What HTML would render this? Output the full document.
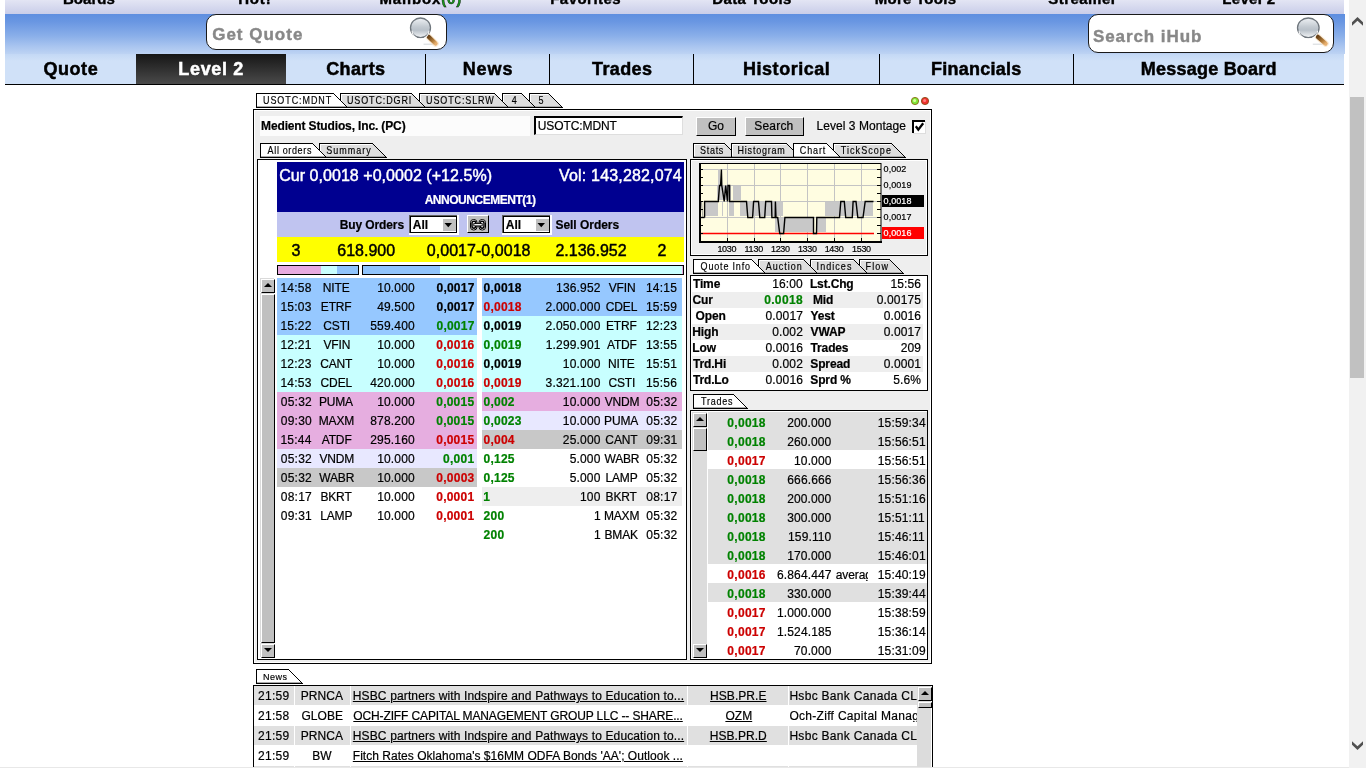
<!DOCTYPE html><html><head><meta charset="utf-8"><style>
html,body{margin:0;padding:0;width:1366px;height:768px;overflow:hidden;background:#fff;}
.t{position:absolute;white-space:nowrap;-webkit-text-stroke:0.2px currentColor;}
.r{position:absolute;}
svg{position:absolute;}
</style></head><body><div style="position:absolute;left:0;top:0;width:1366px;height:768px;overflow:hidden;will-change:transform;background:#fff">
<div class=r style="left:5px;top:0px;width:1339px;height:14px;background:linear-gradient(#e3e5f4,#c9cde9);"></div>
<div class=t style="left:63.00px;top:-9px;font:bold 15px/15px 'Liberation Sans',sans-serif;color:#000;letter-spacing:0.015px;-webkit-text-stroke:0.4px #000;">Boards</div>
<div class=t style="left:238.20px;top:-9px;font:bold 15px/15px 'Liberation Sans',sans-serif;color:#000;letter-spacing:0.825px;-webkit-text-stroke:0.4px #000;">Hot!</div>
<div class=t style="left:379.40px;top:-9px;font:bold 15px/15px 'Liberation Sans',sans-serif;color:#000;letter-spacing:0.847px;-webkit-text-stroke:0.4px #000;">Mailbox<span style='color:#1a9a1a'>(0)</span></div>
<div class=t style="left:550.20px;top:-9px;font:bold 15px/15px 'Liberation Sans',sans-serif;color:#000;letter-spacing:0.472px;-webkit-text-stroke:0.4px #000;">Favorites</div>
<div class=t style="left:712.20px;top:-9px;font:bold 15px/15px 'Liberation Sans',sans-serif;color:#000;letter-spacing:0.400px;-webkit-text-stroke:0.4px #000;">Data Tools</div>
<div class=t style="left:874.70px;top:-9px;font:bold 15px/15px 'Liberation Sans',sans-serif;color:#000;letter-spacing:0.272px;-webkit-text-stroke:0.4px #000;">More Tools</div>
<div class=t style="left:1048.30px;top:-9px;font:bold 15px/15px 'Liberation Sans',sans-serif;color:#000;letter-spacing:0.461px;-webkit-text-stroke:0.4px #000;">Streamer</div>
<div class=t style="left:1222.20px;top:-9px;font:bold 15px/15px 'Liberation Sans',sans-serif;color:#000;letter-spacing:0.358px;-webkit-text-stroke:0.4px #000;">Level 2</div>
<div class=r style="left:5px;top:14px;width:1340px;height:40px;background:linear-gradient(#5e8ee0 0px,#6a97e2 8px,#8aafe9 22px,#abc6f0 33px,#bdd3f3 40px);"></div>
<div class=r style="left:5px;top:54px;width:1339px;height:30px;background:linear-gradient(#c3d8f5 0px,#d0e1f8 7px,#d0e1f8 30px);"></div>
<div class=r style="left:5px;top:84px;width:1339px;height:1px;background:#000;"></div>
<div class=r style='left:206px;top:14px;width:239px;height:34px;border:1.5px solid #1a1a1a;border-radius:10px;background:#fff'></div>
<div class=t style="left:212.18px;top:26px;font:bold 17px/17px 'Liberation Sans',sans-serif;color:#888;letter-spacing:1.000px;-webkit-text-stroke:0.4px #888;">Get Quote</div>
<div class=r style='left:1088px;top:14px;width:244px;height:37px;border:1.5px solid #1a1a1a;border-radius:10px;background:#fff'></div>
<div class=t style="left:1092.90px;top:28px;font:bold 17px/17px 'Liberation Sans',sans-serif;color:#888;letter-spacing:0.927px;-webkit-text-stroke:0.4px #888;">Search iHub</div>
<svg style='left:0;top:0' width='1366' height='60' viewBox='0 0 1366 60'>
<defs><linearGradient id='mga' x1='0' y1='0' x2='0' y2='1'><stop offset='0' stop-color='#eef1f4'/><stop offset='0.45' stop-color='#c3cad1'/><stop offset='0.62' stop-color='#b9c1c9'/><stop offset='1' stop-color='#f4f6f8'/></linearGradient>
<linearGradient id='hga' x1='0' y1='0' x2='1' y2='1'><stop offset='0' stop-color='#6a4318'/><stop offset='0.6' stop-color='#b07a38'/><stop offset='1' stop-color='#e8b070'/></linearGradient></defs>
<line x1='423.6' y1='44.2' x2='434.6' y2='44.2' stroke='#c8ccd0' stroke-width='0.8'/>
<line x1='428.6' y1='36.8' x2='435.6' y2='43.6' stroke='#f8e0c0' stroke-width='6.5' stroke-linecap='round' opacity='0.6'/>
<line x1='428.6' y1='36.8' x2='435.6' y2='43.6' stroke='url(#hga)' stroke-width='4.2' stroke-linecap='round'/>
<ellipse cx='420.5' cy='27.8' rx='10' ry='9.8' fill='url(#mga)' stroke='#6f767d' stroke-width='1.3'/>
<path d='M412.0 30.8 A8.5 8.3 0 0 0 429.0 30.8' fill='none' stroke='#fff' stroke-width='1.1' opacity='0.9'/>
</svg>
<svg style='left:0;top:0' width='1366' height='60' viewBox='0 0 1366 60'>
<defs><linearGradient id='mgb' x1='0' y1='0' x2='0' y2='1'><stop offset='0' stop-color='#eef1f4'/><stop offset='0.45' stop-color='#c3cad1'/><stop offset='0.62' stop-color='#b9c1c9'/><stop offset='1' stop-color='#f4f6f8'/></linearGradient>
<linearGradient id='hgb' x1='0' y1='0' x2='1' y2='1'><stop offset='0' stop-color='#6a4318'/><stop offset='0.6' stop-color='#b07a38'/><stop offset='1' stop-color='#e8b070'/></linearGradient></defs>
<line x1='1312.8' y1='44.2' x2='1324.6' y2='44.2' stroke='#c8ccd0' stroke-width='0.8'/>
<line x1='1317.8' y1='36.8' x2='1325.6' y2='43.6' stroke='#f8e0c0' stroke-width='6.5' stroke-linecap='round' opacity='0.6'/>
<line x1='1317.8' y1='36.8' x2='1325.6' y2='43.6' stroke='url(#hgb)' stroke-width='4.2' stroke-linecap='round'/>
<ellipse cx='1308.3' cy='27.8' rx='10.8' ry='9.8' fill='url(#mgb)' stroke='#6f767d' stroke-width='1.3'/>
<path d='M1299.0 30.8 A9.3 8.3 0 0 0 1317.6 30.8' fill='none' stroke='#fff' stroke-width='1.1' opacity='0.9'/>
</svg>
<div class=r style="left:136px;top:54px;width:150px;height:30px;background:linear-gradient(#161616,#4a4a4a);"></div>
<div class=r style="left:425px;top:54px;width:1px;height:30px;background:#000;"></div>
<div class=r style="left:549px;top:54px;width:1px;height:30px;background:#000;"></div>
<div class=r style="left:693px;top:54px;width:1px;height:30px;background:#000;"></div>
<div class=r style="left:879px;top:54px;width:1px;height:30px;background:#000;"></div>
<div class=r style="left:1073px;top:54px;width:1px;height:30px;background:#000;"></div>
<div class=t style="left:43.50px;top:60px;font:bold 18px/18px 'Liberation Sans',sans-serif;color:#000;letter-spacing:0.544px;-webkit-text-stroke:0.5px #000;">Quote</div>
<div class=t style="left:178.30px;top:60px;font:bold 18px/18px 'Liberation Sans',sans-serif;color:#fff;letter-spacing:0.667px;-webkit-text-stroke:0.5px #fff;">Level 2</div>
<div class=t style="left:326.20px;top:60px;font:bold 18px/18px 'Liberation Sans',sans-serif;color:#000;letter-spacing:0.360px;-webkit-text-stroke:0.5px #000;">Charts</div>
<div class=t style="left:462.70px;top:60px;font:bold 18px/18px 'Liberation Sans',sans-serif;color:#000;letter-spacing:0.933px;-webkit-text-stroke:0.5px #000;">News</div>
<div class=t style="left:592.00px;top:60px;font:bold 18px/18px 'Liberation Sans',sans-serif;color:#000;letter-spacing:0.380px;-webkit-text-stroke:0.5px #000;">Trades</div>
<div class=t style="left:743.00px;top:60px;font:bold 18px/18px 'Liberation Sans',sans-serif;color:#000;letter-spacing:0.533px;-webkit-text-stroke:0.5px #000;">Historical</div>
<div class=t style="left:931.00px;top:60px;font:bold 18px/18px 'Liberation Sans',sans-serif;color:#000;letter-spacing:0.244px;-webkit-text-stroke:0.5px #000;">Financials</div>
<div class=t style="left:1140.70px;top:60px;font:bold 18px/18px 'Liberation Sans',sans-serif;color:#000;letter-spacing:0.237px;-webkit-text-stroke:0.5px #000;">Message Board</div>
<div class=r style="left:1349px;top:0px;width:17px;height:768px;background:#f1f1f1;"></div>
<div class=r style="left:1350px;top:97px;width:14px;height:281px;background:#c1c1c1;"></div>
<svg style='left:1346px;top:10px' width='20' height='20' viewBox='1346 10 20 20'><path d='M1352 22.2 L1357.5 17 L1363 22.2 L1363 25.8 L1357.5 20.8 L1352 25.8 Z' fill='#505050'/></svg>
<svg style='left:1346px;top:735px' width='20' height='20' viewBox='1346 735 20 20'><path d='M1352 741.2 L1357.5 746.2 L1363 741.2 L1363 744.8 L1357.5 750 L1352 744.8 Z' fill='#505050'/></svg>
<svg style='left:254px;top:92px' width='310' height='17' shape-rendering='crispEdges'><polygon points='275.5,1.5 294.5,1.5 308.5,15.5 275.5,15.5' fill='#dedede' stroke='#000' stroke-width='1'/><path d='M276.5 14.5 V2.5 H294' fill='none' stroke='#fff' stroke-width='1'/><line x1='276' y1='14.5' x2='307' y2='14.5' stroke='#aaa' stroke-width='1'/><polygon points='248.5,1.5 267.5,1.5 281.5,15.5 248.5,15.5' fill='#dedede' stroke='#000' stroke-width='1'/><path d='M249.5 14.5 V2.5 H267' fill='none' stroke='#fff' stroke-width='1'/><line x1='249' y1='14.5' x2='280' y2='14.5' stroke='#aaa' stroke-width='1'/><polygon points='165.5,1.5 240.5,1.5 254.5,15.5 165.5,15.5' fill='#dedede' stroke='#000' stroke-width='1'/><path d='M166.5 14.5 V2.5 H240' fill='none' stroke='#fff' stroke-width='1'/><line x1='166' y1='14.5' x2='253' y2='14.5' stroke='#aaa' stroke-width='1'/><polygon points='86.5,1.5 157.5,1.5 171.5,15.5 86.5,15.5' fill='#dedede' stroke='#000' stroke-width='1'/><path d='M87.5 14.5 V2.5 H157' fill='none' stroke='#fff' stroke-width='1'/><line x1='87' y1='14.5' x2='170' y2='14.5' stroke='#aaa' stroke-width='1'/><polygon points='2.5,1.5 79.5,1.5 93.5,15.5 2.5,15.5' fill='#fff' stroke='#000' stroke-width='1'/><line x1='3' y1='14.5' x2='92' y2='14.5' stroke='#aaa' stroke-width='1'/></svg>
<div class=t style="left:262.98px;top:97px;font:9px/9px 'Liberation Sans',sans-serif;color:#000;letter-spacing:0.919px;-webkit-text-stroke:0.15px #000;transform:scaleY(1.17);transform-origin:0 7px;">USOTC:MDNT</div>
<div class=t style="left:346.98px;top:97px;font:9px/9px 'Liberation Sans',sans-serif;color:#000;letter-spacing:0.878px;-webkit-text-stroke:0.15px #000;transform:scaleY(1.17);transform-origin:0 7px;">USOTC:DGRI</div>
<div class=t style="left:426.07px;top:97px;font:9px/9px 'Liberation Sans',sans-serif;color:#000;letter-spacing:0.872px;-webkit-text-stroke:0.15px #000;transform:scaleY(1.17);transform-origin:0 7px;">USOTC:SLRW</div>
<div class=t style="left:511.75px;top:97px;font:9px/9px 'Liberation Sans',sans-serif;color:#000;-webkit-text-stroke:0.15px #000;transform:scaleY(1.17);transform-origin:0 7px;">4</div>
<div class=t style="left:538.62px;top:97px;font:9px/9px 'Liberation Sans',sans-serif;color:#000;-webkit-text-stroke:0.15px #000;transform:scaleY(1.17);transform-origin:0 7px;">5</div>
<svg style='left:910px;top:96px' width='20' height='10'><circle cx='5' cy='5' r='3.6' fill='#7de83a' stroke='#8a6a10' stroke-width='0.9'/><circle cx='4.6' cy='4.6' r='1.5' fill='#d8ff9a'/><circle cx='15' cy='5' r='3.6' fill='#f03030' stroke='#8a4a10' stroke-width='0.9'/><circle cx='14.6' cy='4.6' r='1.5' fill='#ff8080'/></svg>
<div class=r style='left:253px;top:109px;width:677px;height:553px;border:1px solid #000;background:#eee;box-shadow:inset 1px 1px 0 #fff, inset -1px -1px 0 #fff'></div>
<div class=r style="left:260px;top:116px;width:270px;height:20px;background:#fcfcfc;"></div>
<div class=t style="left:261.05px;top:120px;font:bold 12px/12px 'Liberation Sans',sans-serif;color:#000;letter-spacing:-0.137px;">Medient Studios, Inc. (PC)</div>
<div class=r style='left:534px;top:116px;width:146px;height:16px;background:#fff;border-top:2px solid #000;border-left:2px solid #000;border-bottom:1px solid #dedede;border-right:1px solid #dedede'></div>
<div class=t style="left:537.73px;top:120px;font:12px/12px 'Liberation Sans',sans-serif;color:#000;letter-spacing:-0.086px;">USOTC:MDNT</div>
<div class=r style='left:696px;top:117px;width:38px;height:17px;background:#c0c0c0;border-top:1px solid #fff;border-left:1px solid #fff;border-right:1px solid #000;border-bottom:1px solid #000'></div>
<div class=t style="left:708.08px;top:120px;font:12px/12px 'Liberation Sans',sans-serif;color:#000;letter-spacing:-0.275px;">Go</div>
<div class=r style='left:745px;top:117px;width:57px;height:17px;background:#c0c0c0;border-top:1px solid #fff;border-left:1px solid #fff;border-right:1px solid #000;border-bottom:1px solid #000'></div>
<div class=t style="left:754.30px;top:120px;font:12px/12px 'Liberation Sans',sans-serif;color:#000;letter-spacing:0.190px;">Search</div>
<div class=t style="left:816.50px;top:120px;font:12px/12px 'Liberation Sans',sans-serif;color:#000;letter-spacing:0.048px;">Level 3 Montage</div>
<div class=r style='left:912px;top:120px;width:11px;height:11px;background:#fff;border-top:2px solid #000;border-left:2px solid #000;border-bottom:0;border-right:0;box-shadow:1px 1px 0 #ddd'></div>
<svg style='left:912px;top:120px' width='14' height='14'><path d='M3.8 6.2 L6.3 9.6 L11.2 3.2' fill='none' stroke='#000' stroke-width='2.3'/></svg>
<svg style='left:258px;top:142px' width='130' height='17' shape-rendering='crispEdges'><polygon points='61.5,1.5 114.5,1.5 128.5,15.5 61.5,15.5' fill='#dedede' stroke='#000' stroke-width='1'/><path d='M62.5 14.5 V2.5 H114' fill='none' stroke='#fff' stroke-width='1'/><line x1='62' y1='14.5' x2='127' y2='14.5' stroke='#aaa' stroke-width='1'/><polygon points='2.5,1.5 54.5,1.5 68.5,15.5 2.5,15.5' fill='#fff' stroke='#000' stroke-width='1'/><line x1='3' y1='14.5' x2='67' y2='14.5' stroke='#aaa' stroke-width='1'/></svg>
<div class=t style="left:267.60px;top:147px;font:9px/9px 'Liberation Sans',sans-serif;color:#000;letter-spacing:0.642px;-webkit-text-stroke:0.15px #000;transform:scaleY(1.17);transform-origin:0 7px;">All orders</div>
<div class=t style="left:326.32px;top:147px;font:9px/9px 'Liberation Sans',sans-serif;color:#000;letter-spacing:0.996px;-webkit-text-stroke:0.15px #000;transform:scaleY(1.17);transform-origin:0 7px;">Summary</div>
<div class=r style='left:257px;top:159px;width:428px;height:499px;border:1px solid #000;background:#fff'></div>
<div class=r style="left:277px;top:162px;width:407px;height:50px;background:#000090;"></div>
<div class=t style="left:279.15px;top:168px;font:16px/16px 'Liberation Sans',sans-serif;color:#fff;letter-spacing:0.046px;-webkit-text-stroke:0.45px #fff;">Cur 0,0018 +0,0002 (+12.5%)</div>
<div class=t style="left:559.08px;top:168px;font:16px/16px 'Liberation Sans',sans-serif;color:#fff;letter-spacing:0.172px;-webkit-text-stroke:0.45px #fff;">Vol: 143,282,074</div>
<div class=t style="left:424.65px;top:194px;font:bold 12px/12px 'Liberation Sans',sans-serif;color:#fff;letter-spacing:-0.473px;">ANNOUNCEMENT(1)</div>
<div class=r style="left:277px;top:212px;width:407px;height:25px;background:#c0c4f0;"></div>
<div class=t style="left:339.75px;top:219px;font:bold 12px/12px 'Liberation Sans',sans-serif;color:#000;letter-spacing:-0.114px;">Buy Orders</div>
<div class=t style="left:555.42px;top:219px;font:bold 12px/12px 'Liberation Sans',sans-serif;color:#000;letter-spacing:-0.025px;">Sell Orders</div>
<div class=r style="left:409px;top:215px;width:50px;height:20px;background:#fff;"></div>
<div class=r style="left:409px;top:215px;width:48px;height:1px;background:#606060;"></div>
<div class=r style="left:409px;top:215px;width:1px;height:18px;background:#606060;"></div>
<div class=r style='left:410px;top:216px;width:47px;height:17px;border:1px solid #000;box-sizing:border-box'></div>
<div class=r style="left:441px;top:217px;width:13px;height:1px;background:#fff;"></div>
<div class=r style="left:441px;top:217px;width:1px;height:14px;background:#fff;"></div>
<div class=r style="left:443px;top:219px;width:13px;height:12px;background:#c0c0c0;"></div>
<svg style='left:444px;top:223px' width='9' height='6'><path d='M0.5 0 H8 L4.25 4.2 Z' fill='#000'/></svg>
<div class=t style="left:412.65px;top:219px;font:bold 12px/12px 'Liberation Sans',sans-serif;color:#000;letter-spacing:0.100px;">All</div>
<div class=r style="left:502px;top:215px;width:50px;height:20px;background:#fff;"></div>
<div class=r style="left:502px;top:215px;width:48px;height:1px;background:#606060;"></div>
<div class=r style="left:502px;top:215px;width:1px;height:18px;background:#606060;"></div>
<div class=r style='left:503px;top:216px;width:47px;height:17px;border:1px solid #000;box-sizing:border-box'></div>
<div class=r style="left:534px;top:217px;width:13px;height:1px;background:#fff;"></div>
<div class=r style="left:534px;top:217px;width:1px;height:14px;background:#fff;"></div>
<div class=r style="left:536px;top:219px;width:13px;height:12px;background:#c0c0c0;"></div>
<svg style='left:537px;top:223px' width='9' height='6'><path d='M0.5 0 H8 L4.25 4.2 Z' fill='#000'/></svg>
<div class=t style="left:505.65px;top:219px;font:bold 12px/12px 'Liberation Sans',sans-serif;color:#000;letter-spacing:0.100px;">All</div>
<div class=r style='left:467px;top:215px;width:20px;height:16px;background:#c0c0c0;border-top:1px solid #fff;border-left:1px solid #fff;border-right:1px solid #000;border-bottom:1px solid #000'></div>
<svg style='left:469px;top:218px' width='19' height='14'><rect x='1.5' y='1.5' width='6.5' height='10.5' rx='3' fill='#fff' stroke='#000' stroke-width='1'/><rect x='10' y='1.5' width='6.5' height='10.5' rx='3' fill='#fff' stroke='#000' stroke-width='1'/><rect x='3' y='3.2' width='3.8' height='7' rx='1.9' fill='none' stroke='#000' stroke-width='1.5'/><rect x='11.2' y='3.2' width='3.8' height='7' rx='1.9' fill='none' stroke='#000' stroke-width='1.5'/><rect x='4.8' y='5.6' width='8.4' height='2.3' fill='#fff' stroke='#000' stroke-width='0.9'/></svg>
<div class=r style="left:277px;top:237px;width:407px;height:25px;background:#ffff00;"></div>
<div class=t style="left:291.38px;top:243px;font:16px/16px 'Liberation Sans',sans-serif;color:#000;-webkit-text-stroke:0.45px #000;">3</div>
<div class=t style="left:337.25px;top:243px;font:16px/16px 'Liberation Sans',sans-serif;color:#000;letter-spacing:0.017px;-webkit-text-stroke:0.45px #000;">618.900</div>
<div class=t style="left:426.77px;top:243px;font:16px/16px 'Liberation Sans',sans-serif;color:#000;letter-spacing:0.044px;-webkit-text-stroke:0.45px #000;">0,0017-0,0018</div>
<div class=t style="left:555.45px;top:243px;font:16px/16px 'Liberation Sans',sans-serif;color:#000;letter-spacing:-0.003px;-webkit-text-stroke:0.45px #000;">2.136.952</div>
<div class=t style="left:657.45px;top:243px;font:16px/16px 'Liberation Sans',sans-serif;color:#000;-webkit-text-stroke:0.45px #000;">2</div>
<div class=r style='left:277px;top:265px;width:80px;height:8px;border:1px solid #000;background:linear-gradient(90deg,#e8aae0 0,#e8aae0 43px,#c8ffff 43px,#c8ffff 59px,#90c4fc 59px)'></div>
<div class=r style='left:362px;top:265px;width:320px;height:8px;border:1px solid #000;background:linear-gradient(90deg,#90c4fc 0,#90c4fc 77px,#c8ffff 77px,#c8ffff 319px,#e8aae0 319px)'></div>
<div class=r style="left:277px;top:278px;width:200px;height:19px;background:#96c8ff;"></div>
<div class=t style="left:280.43px;top:282px;font:12px/12px 'Liberation Sans',sans-serif;color:#000;letter-spacing:0.220px;">14:58</div>
<div class=t style="left:322.79px;top:282px;font:12px/12px 'Liberation Sans',sans-serif;color:#000;letter-spacing:-0.150px;">NITE</div>
<div class=t style="left:377.15px;top:282px;font:12px/12px 'Liberation Sans',sans-serif;color:#000;letter-spacing:0.180px;">10.000</div>
<div class=t style="left:436.48px;top:282px;font:bold 12px/12px 'Liberation Sans',sans-serif;color:#000;letter-spacing:0.240px;">0,0017</div>
<div class=r style="left:277px;top:297px;width:200px;height:19px;background:#96c8ff;"></div>
<div class=t style="left:280.43px;top:301px;font:12px/12px 'Liberation Sans',sans-serif;color:#000;letter-spacing:0.220px;">15:03</div>
<div class=t style="left:320.79px;top:301px;font:12px/12px 'Liberation Sans',sans-serif;color:#000;letter-spacing:-0.150px;">ETRF</div>
<div class=t style="left:377.15px;top:301px;font:12px/12px 'Liberation Sans',sans-serif;color:#000;letter-spacing:0.180px;">49.500</div>
<div class=t style="left:436.48px;top:301px;font:bold 12px/12px 'Liberation Sans',sans-serif;color:#000;letter-spacing:0.240px;">0,0017</div>
<div class=r style="left:277px;top:316px;width:200px;height:19px;background:#96c8ff;"></div>
<div class=t style="left:280.43px;top:320px;font:12px/12px 'Liberation Sans',sans-serif;color:#000;letter-spacing:0.220px;">15:22</div>
<div class=t style="left:323.29px;top:320px;font:12px/12px 'Liberation Sans',sans-serif;color:#000;letter-spacing:-0.150px;">CSTI</div>
<div class=t style="left:370.22px;top:320px;font:12px/12px 'Liberation Sans',sans-serif;color:#000;letter-spacing:0.180px;">559.400</div>
<div class=t style="left:436.48px;top:320px;font:bold 12px/12px 'Liberation Sans',sans-serif;color:#008200;letter-spacing:0.240px;">0,0017</div>
<div class=r style="left:277px;top:335px;width:200px;height:19px;background:#c8ffff;"></div>
<div class=t style="left:280.43px;top:339px;font:12px/12px 'Liberation Sans',sans-serif;color:#000;letter-spacing:0.220px;">12:21</div>
<div class=t style="left:323.48px;top:339px;font:12px/12px 'Liberation Sans',sans-serif;color:#000;letter-spacing:-0.150px;">VFIN</div>
<div class=t style="left:377.15px;top:339px;font:12px/12px 'Liberation Sans',sans-serif;color:#000;letter-spacing:0.180px;">10.000</div>
<div class=t style="left:436.35px;top:339px;font:bold 12px/12px 'Liberation Sans',sans-serif;color:#cc0000;letter-spacing:0.240px;">0,0016</div>
<div class=r style="left:277px;top:354px;width:200px;height:19px;background:#c8ffff;"></div>
<div class=t style="left:280.43px;top:358px;font:12px/12px 'Liberation Sans',sans-serif;color:#000;letter-spacing:0.220px;">12:23</div>
<div class=t style="left:320.16px;top:358px;font:12px/12px 'Liberation Sans',sans-serif;color:#000;letter-spacing:-0.150px;">CANT</div>
<div class=t style="left:377.15px;top:358px;font:12px/12px 'Liberation Sans',sans-serif;color:#000;letter-spacing:0.180px;">10.000</div>
<div class=t style="left:436.35px;top:358px;font:bold 12px/12px 'Liberation Sans',sans-serif;color:#cc0000;letter-spacing:0.240px;">0,0016</div>
<div class=r style="left:277px;top:373px;width:200px;height:19px;background:#c8ffff;"></div>
<div class=t style="left:280.43px;top:377px;font:12px/12px 'Liberation Sans',sans-serif;color:#000;letter-spacing:0.220px;">14:53</div>
<div class=t style="left:320.60px;top:377px;font:12px/12px 'Liberation Sans',sans-serif;color:#000;letter-spacing:-0.150px;">CDEL</div>
<div class=t style="left:370.22px;top:377px;font:12px/12px 'Liberation Sans',sans-serif;color:#000;letter-spacing:0.180px;">420.000</div>
<div class=t style="left:436.35px;top:377px;font:bold 12px/12px 'Liberation Sans',sans-serif;color:#cc0000;letter-spacing:0.240px;">0,0016</div>
<div class=r style="left:277px;top:392px;width:200px;height:19px;background:#e6aee0;"></div>
<div class=t style="left:280.80px;top:396px;font:12px/12px 'Liberation Sans',sans-serif;color:#000;letter-spacing:0.220px;">05:32</div>
<div class=t style="left:318.91px;top:396px;font:12px/12px 'Liberation Sans',sans-serif;color:#000;letter-spacing:-0.150px;">PUMA</div>
<div class=t style="left:377.15px;top:396px;font:12px/12px 'Liberation Sans',sans-serif;color:#000;letter-spacing:0.180px;">10.000</div>
<div class=t style="left:436.23px;top:396px;font:bold 12px/12px 'Liberation Sans',sans-serif;color:#008200;letter-spacing:0.240px;">0,0015</div>
<div class=r style="left:277px;top:411px;width:200px;height:19px;background:#e6aee0;"></div>
<div class=t style="left:280.80px;top:415px;font:12px/12px 'Liberation Sans',sans-serif;color:#000;letter-spacing:0.220px;">09:30</div>
<div class=t style="left:318.73px;top:415px;font:12px/12px 'Liberation Sans',sans-serif;color:#000;letter-spacing:-0.150px;">MAXM</div>
<div class=t style="left:370.22px;top:415px;font:12px/12px 'Liberation Sans',sans-serif;color:#000;letter-spacing:0.180px;">878.200</div>
<div class=t style="left:436.23px;top:415px;font:bold 12px/12px 'Liberation Sans',sans-serif;color:#008200;letter-spacing:0.240px;">0,0015</div>
<div class=r style="left:277px;top:430px;width:200px;height:19px;background:#e6aee0;"></div>
<div class=t style="left:280.43px;top:434px;font:12px/12px 'Liberation Sans',sans-serif;color:#000;letter-spacing:0.220px;">15:44</div>
<div class=t style="left:321.73px;top:434px;font:12px/12px 'Liberation Sans',sans-serif;color:#000;letter-spacing:-0.150px;">ATDF</div>
<div class=t style="left:370.22px;top:434px;font:12px/12px 'Liberation Sans',sans-serif;color:#000;letter-spacing:0.180px;">295.160</div>
<div class=t style="left:436.23px;top:434px;font:bold 12px/12px 'Liberation Sans',sans-serif;color:#cc0000;letter-spacing:0.240px;">0,0015</div>
<div class=r style="left:277px;top:449px;width:200px;height:19px;background:#e8e8ff;"></div>
<div class=t style="left:280.80px;top:453px;font:12px/12px 'Liberation Sans',sans-serif;color:#000;letter-spacing:0.220px;">05:32</div>
<div class=t style="left:319.48px;top:453px;font:12px/12px 'Liberation Sans',sans-serif;color:#000;letter-spacing:-0.150px;">VNDM</div>
<div class=t style="left:377.15px;top:453px;font:12px/12px 'Liberation Sans',sans-serif;color:#000;letter-spacing:0.180px;">10.000</div>
<div class=t style="left:443.09px;top:453px;font:bold 12px/12px 'Liberation Sans',sans-serif;color:#008200;letter-spacing:0.240px;">0,001</div>
<div class=r style="left:277px;top:468px;width:200px;height:19px;background:#c8c8c8;"></div>
<div class=t style="left:280.80px;top:472px;font:12px/12px 'Liberation Sans',sans-serif;color:#000;letter-spacing:0.220px;">05:32</div>
<div class=t style="left:319.23px;top:472px;font:12px/12px 'Liberation Sans',sans-serif;color:#000;letter-spacing:-0.150px;">WABR</div>
<div class=t style="left:377.15px;top:472px;font:12px/12px 'Liberation Sans',sans-serif;color:#000;letter-spacing:0.180px;">10.000</div>
<div class=t style="left:436.35px;top:472px;font:bold 12px/12px 'Liberation Sans',sans-serif;color:#cc0000;letter-spacing:0.240px;">0,0003</div>
<div class=t style="left:280.80px;top:491px;font:12px/12px 'Liberation Sans',sans-serif;color:#000;letter-spacing:0.220px;">08:17</div>
<div class=t style="left:320.41px;top:491px;font:12px/12px 'Liberation Sans',sans-serif;color:#000;letter-spacing:-0.150px;">BKRT</div>
<div class=t style="left:377.15px;top:491px;font:12px/12px 'Liberation Sans',sans-serif;color:#000;letter-spacing:0.180px;">10.000</div>
<div class=t style="left:436.23px;top:491px;font:bold 12px/12px 'Liberation Sans',sans-serif;color:#cc0000;letter-spacing:0.240px;">0,0001</div>
<div class=t style="left:280.80px;top:510px;font:12px/12px 'Liberation Sans',sans-serif;color:#000;letter-spacing:0.220px;">09:31</div>
<div class=t style="left:320.23px;top:510px;font:12px/12px 'Liberation Sans',sans-serif;color:#000;letter-spacing:-0.150px;">LAMP</div>
<div class=t style="left:377.15px;top:510px;font:12px/12px 'Liberation Sans',sans-serif;color:#000;letter-spacing:0.180px;">10.000</div>
<div class=t style="left:436.23px;top:510px;font:bold 12px/12px 'Liberation Sans',sans-serif;color:#cc0000;letter-spacing:0.240px;">0,0001</div>
<div class=r style="left:482px;top:278px;width:200px;height:19px;background:#96c8ff;"></div>
<div class=t style="left:483.50px;top:282px;font:bold 12px/12px 'Liberation Sans',sans-serif;color:#000;letter-spacing:0.240px;">0,0018</div>
<div class=t style="left:556.04px;top:282px;font:12px/12px 'Liberation Sans',sans-serif;color:#000;letter-spacing:0.180px;">136.952</div>
<div class=t style="left:608.68px;top:282px;font:12px/12px 'Liberation Sans',sans-serif;color:#000;letter-spacing:-0.150px;">VFIN</div>
<div class=t style="left:645.92px;top:282px;font:12px/12px 'Liberation Sans',sans-serif;color:#000;letter-spacing:0.220px;">14:15</div>
<div class=r style="left:482px;top:297px;width:200px;height:19px;background:#96c8ff;"></div>
<div class=t style="left:483.50px;top:301px;font:bold 12px/12px 'Liberation Sans',sans-serif;color:#cc0000;letter-spacing:0.240px;">0,0018</div>
<div class=t style="left:545.56px;top:301px;font:12px/12px 'Liberation Sans',sans-serif;color:#000;letter-spacing:0.180px;">2.000.000</div>
<div class=t style="left:605.80px;top:301px;font:12px/12px 'Liberation Sans',sans-serif;color:#000;letter-spacing:-0.150px;">CDEL</div>
<div class=t style="left:645.92px;top:301px;font:12px/12px 'Liberation Sans',sans-serif;color:#000;letter-spacing:0.220px;">15:59</div>
<div class=r style="left:482px;top:316px;width:200px;height:19px;background:#c8ffff;"></div>
<div class=t style="left:483.50px;top:320px;font:bold 12px/12px 'Liberation Sans',sans-serif;color:#000;letter-spacing:0.240px;">0,0019</div>
<div class=t style="left:545.56px;top:320px;font:12px/12px 'Liberation Sans',sans-serif;color:#000;letter-spacing:0.180px;">2.050.000</div>
<div class=t style="left:605.99px;top:320px;font:12px/12px 'Liberation Sans',sans-serif;color:#000;letter-spacing:-0.150px;">ETRF</div>
<div class=t style="left:645.92px;top:320px;font:12px/12px 'Liberation Sans',sans-serif;color:#000;letter-spacing:0.220px;">12:23</div>
<div class=r style="left:482px;top:335px;width:200px;height:19px;background:#c8ffff;"></div>
<div class=t style="left:483.50px;top:339px;font:bold 12px/12px 'Liberation Sans',sans-serif;color:#008200;letter-spacing:0.240px;">0,0019</div>
<div class=t style="left:545.68px;top:339px;font:12px/12px 'Liberation Sans',sans-serif;color:#000;letter-spacing:0.180px;">1.299.901</div>
<div class=t style="left:606.93px;top:339px;font:12px/12px 'Liberation Sans',sans-serif;color:#000;letter-spacing:-0.150px;">ATDF</div>
<div class=t style="left:645.92px;top:339px;font:12px/12px 'Liberation Sans',sans-serif;color:#000;letter-spacing:0.220px;">13:55</div>
<div class=r style="left:482px;top:354px;width:200px;height:19px;background:#c8ffff;"></div>
<div class=t style="left:483.50px;top:358px;font:bold 12px/12px 'Liberation Sans',sans-serif;color:#000;letter-spacing:0.240px;">0,0019</div>
<div class=t style="left:562.85px;top:358px;font:12px/12px 'Liberation Sans',sans-serif;color:#000;letter-spacing:0.180px;">10.000</div>
<div class=t style="left:607.99px;top:358px;font:12px/12px 'Liberation Sans',sans-serif;color:#000;letter-spacing:-0.150px;">NITE</div>
<div class=t style="left:645.92px;top:358px;font:12px/12px 'Liberation Sans',sans-serif;color:#000;letter-spacing:0.220px;">15:51</div>
<div class=r style="left:482px;top:373px;width:200px;height:19px;background:#c8ffff;"></div>
<div class=t style="left:483.50px;top:377px;font:bold 12px/12px 'Liberation Sans',sans-serif;color:#cc0000;letter-spacing:0.240px;">0,0019</div>
<div class=t style="left:545.56px;top:377px;font:12px/12px 'Liberation Sans',sans-serif;color:#000;letter-spacing:0.180px;">3.321.100</div>
<div class=t style="left:608.49px;top:377px;font:12px/12px 'Liberation Sans',sans-serif;color:#000;letter-spacing:-0.150px;">CSTI</div>
<div class=t style="left:645.92px;top:377px;font:12px/12px 'Liberation Sans',sans-serif;color:#000;letter-spacing:0.220px;">15:56</div>
<div class=r style="left:482px;top:392px;width:200px;height:19px;background:#e6aee0;"></div>
<div class=t style="left:483.50px;top:396px;font:bold 12px/12px 'Liberation Sans',sans-serif;color:#008200;letter-spacing:0.240px;">0,002</div>
<div class=t style="left:562.85px;top:396px;font:12px/12px 'Liberation Sans',sans-serif;color:#000;letter-spacing:0.180px;">10.000</div>
<div class=t style="left:604.68px;top:396px;font:12px/12px 'Liberation Sans',sans-serif;color:#000;letter-spacing:-0.150px;">VNDM</div>
<div class=t style="left:646.30px;top:396px;font:12px/12px 'Liberation Sans',sans-serif;color:#000;letter-spacing:0.220px;">05:32</div>
<div class=r style="left:482px;top:411px;width:200px;height:19px;background:#e8e8ff;"></div>
<div class=t style="left:483.50px;top:415px;font:bold 12px/12px 'Liberation Sans',sans-serif;color:#008200;letter-spacing:0.240px;">0,0023</div>
<div class=t style="left:562.85px;top:415px;font:12px/12px 'Liberation Sans',sans-serif;color:#000;letter-spacing:0.180px;">10.000</div>
<div class=t style="left:604.11px;top:415px;font:12px/12px 'Liberation Sans',sans-serif;color:#000;letter-spacing:-0.150px;">PUMA</div>
<div class=t style="left:646.30px;top:415px;font:12px/12px 'Liberation Sans',sans-serif;color:#000;letter-spacing:0.220px;">05:32</div>
<div class=r style="left:482px;top:430px;width:200px;height:19px;background:#c8c8c8;"></div>
<div class=t style="left:483.50px;top:434px;font:bold 12px/12px 'Liberation Sans',sans-serif;color:#cc0000;letter-spacing:0.240px;">0,004</div>
<div class=t style="left:562.85px;top:434px;font:12px/12px 'Liberation Sans',sans-serif;color:#000;letter-spacing:0.180px;">25.000</div>
<div class=t style="left:605.36px;top:434px;font:12px/12px 'Liberation Sans',sans-serif;color:#000;letter-spacing:-0.150px;">CANT</div>
<div class=t style="left:646.30px;top:434px;font:12px/12px 'Liberation Sans',sans-serif;color:#000;letter-spacing:0.220px;">09:31</div>
<div class=t style="left:483.50px;top:453px;font:bold 12px/12px 'Liberation Sans',sans-serif;color:#008200;letter-spacing:0.240px;">0,125</div>
<div class=t style="left:569.65px;top:453px;font:12px/12px 'Liberation Sans',sans-serif;color:#000;letter-spacing:0.180px;">5.000</div>
<div class=t style="left:604.43px;top:453px;font:12px/12px 'Liberation Sans',sans-serif;color:#000;letter-spacing:-0.150px;">WABR</div>
<div class=t style="left:646.30px;top:453px;font:12px/12px 'Liberation Sans',sans-serif;color:#000;letter-spacing:0.220px;">05:32</div>
<div class=t style="left:483.50px;top:472px;font:bold 12px/12px 'Liberation Sans',sans-serif;color:#008200;letter-spacing:0.240px;">0,125</div>
<div class=t style="left:569.65px;top:472px;font:12px/12px 'Liberation Sans',sans-serif;color:#000;letter-spacing:0.180px;">5.000</div>
<div class=t style="left:605.43px;top:472px;font:12px/12px 'Liberation Sans',sans-serif;color:#000;letter-spacing:-0.150px;">LAMP</div>
<div class=t style="left:646.30px;top:472px;font:12px/12px 'Liberation Sans',sans-serif;color:#000;letter-spacing:0.220px;">05:32</div>
<div class=r style="left:482px;top:487px;width:200px;height:19px;background:#eeeeee;"></div>
<div class=t style="left:483.25px;top:491px;font:bold 12px/12px 'Liberation Sans',sans-serif;color:#008200;letter-spacing:0.240px;">1</div>
<div class=t style="left:580.01px;top:491px;font:12px/12px 'Liberation Sans',sans-serif;color:#000;letter-spacing:0.180px;">100</div>
<div class=t style="left:605.61px;top:491px;font:12px/12px 'Liberation Sans',sans-serif;color:#000;letter-spacing:-0.150px;">BKRT</div>
<div class=t style="left:646.30px;top:491px;font:12px/12px 'Liberation Sans',sans-serif;color:#000;letter-spacing:0.220px;">08:17</div>
<div class=t style="left:483.62px;top:510px;font:bold 12px/12px 'Liberation Sans',sans-serif;color:#008200;letter-spacing:0.240px;">200</div>
<div class=t style="left:593.88px;top:510px;font:12px/12px 'Liberation Sans',sans-serif;color:#000;letter-spacing:0.180px;">1</div>
<div class=t style="left:603.93px;top:510px;font:12px/12px 'Liberation Sans',sans-serif;color:#000;letter-spacing:-0.150px;">MAXM</div>
<div class=t style="left:646.30px;top:510px;font:12px/12px 'Liberation Sans',sans-serif;color:#000;letter-spacing:0.220px;">05:32</div>
<div class=t style="left:483.62px;top:529px;font:bold 12px/12px 'Liberation Sans',sans-serif;color:#008200;letter-spacing:0.240px;">200</div>
<div class=t style="left:593.88px;top:529px;font:12px/12px 'Liberation Sans',sans-serif;color:#000;letter-spacing:0.180px;">1</div>
<div class=t style="left:604.49px;top:529px;font:12px/12px 'Liberation Sans',sans-serif;color:#000;letter-spacing:-0.150px;">BMAK</div>
<div class=t style="left:646.30px;top:529px;font:12px/12px 'Liberation Sans',sans-serif;color:#000;letter-spacing:0.220px;">05:32</div>
<div class=r style='left:261px;top:279px;width:12px;height:12px;background:#c0c0c0;border-top:1px solid #fff;border-left:1px solid #fff;border-right:1px solid #000;border-bottom:1px solid #000;box-shadow:-1px -1px 0 #dadada'></div>
<svg style='left:264px;top:282px' width='8' height='6'><path d='M0 5 H8 L4 1 Z' fill='#000'/></svg>
<div class=r style='left:261px;top:294px;width:12px;height:347px;background:#c0c0c0;border-top:1px solid #fff;border-left:1px solid #fff;border-right:1px solid #000;border-bottom:1px solid #000;box-shadow:-1px -1px 0 #dadada'></div>
<div class=r style='left:261px;top:644px;width:12px;height:12px;background:#c0c0c0;border-top:1px solid #fff;border-left:1px solid #fff;border-right:1px solid #000;border-bottom:1px solid #000;box-shadow:-1px -1px 0 #dadada'></div>
<svg style='left:264px;top:647px' width='8' height='6'><path d='M0 1 H8 L4 5 Z' fill='#000'/></svg>
<svg style='left:691px;top:142px' width='216' height='17' shape-rendering='crispEdges'><polygon points='2.5,1.5 33.5,1.5 47.5,15.5 2.5,15.5' fill='#dedede' stroke='#000' stroke-width='1'/><path d='M3.5 14.5 V2.5 H33' fill='none' stroke='#fff' stroke-width='1'/><line x1='3' y1='14.5' x2='46' y2='14.5' stroke='#aaa' stroke-width='1'/><polygon points='40.5,1.5 95.5,1.5 109.5,15.5 40.5,15.5' fill='#dedede' stroke='#000' stroke-width='1'/><path d='M41.5 14.5 V2.5 H95' fill='none' stroke='#fff' stroke-width='1'/><line x1='41' y1='14.5' x2='108' y2='14.5' stroke='#aaa' stroke-width='1'/><polygon points='142.5,1.5 200.5,1.5 214.5,15.5 142.5,15.5' fill='#dedede' stroke='#000' stroke-width='1'/><path d='M143.5 14.5 V2.5 H200' fill='none' stroke='#fff' stroke-width='1'/><line x1='143' y1='14.5' x2='213' y2='14.5' stroke='#aaa' stroke-width='1'/><polygon points='102.5,1.5 135.5,1.5 149.5,15.5 102.5,15.5' fill='#fff' stroke='#000' stroke-width='1'/><line x1='103' y1='14.5' x2='148' y2='14.5' stroke='#aaa' stroke-width='1'/></svg>
<div class=t style="left:700.12px;top:147px;font:9px/9px 'Liberation Sans',sans-serif;color:#000;letter-spacing:0.688px;-webkit-text-stroke:0.15px #000;transform:scaleY(1.17);transform-origin:0 7px;">Stats</div>
<div class=t style="left:737.55px;top:147px;font:9px/9px 'Liberation Sans',sans-serif;color:#000;letter-spacing:0.784px;-webkit-text-stroke:0.15px #000;transform:scaleY(1.17);transform-origin:0 7px;">Histogram</div>
<div class=t style="left:799.80px;top:147px;font:9px/9px 'Liberation Sans',sans-serif;color:#000;letter-spacing:0.875px;-webkit-text-stroke:0.15px #000;transform:scaleY(1.17);transform-origin:0 7px;">Chart</div>
<div class=t style="left:840.75px;top:147px;font:9px/9px 'Liberation Sans',sans-serif;color:#000;letter-spacing:1.062px;-webkit-text-stroke:0.15px #000;transform:scaleY(1.17);transform-origin:0 7px;">TickScope</div>
<div class=r style='left:690px;top:159px;width:236px;height:95px;border:1px solid #000;background:#eee;box-shadow:inset 1px 1px 0 #fff, inset -1px -1px 0 #fff'></div>
<svg style='left:692px;top:161px' width='234' height='93' viewBox='692 161 234 93'><rect x='700' y='163' width='181' height='79' fill='#fffde1'/><line x1='727.5' y1='163' x2='727.5' y2='242' stroke='#c4c4c4' stroke-width='1'/><line x1='754.5' y1='163' x2='754.5' y2='242' stroke='#c4c4c4' stroke-width='1'/><line x1='780.5' y1='163' x2='780.5' y2='242' stroke='#c4c4c4' stroke-width='1'/><line x1='807.5' y1='163' x2='807.5' y2='242' stroke='#c4c4c4' stroke-width='1'/><line x1='834.5' y1='163' x2='834.5' y2='242' stroke='#c4c4c4' stroke-width='1'/><line x1='861.5' y1='163' x2='861.5' y2='242' stroke='#c4c4c4' stroke-width='1'/><line x1='700' y1='169.5' x2='881' y2='169.5' stroke='#c4c4c4' stroke-width='1'/><line x1='700' y1='185.5' x2='881' y2='185.5' stroke='#c4c4c4' stroke-width='1'/><line x1='700' y1='201.5' x2='881' y2='201.5' stroke='#c4c4c4' stroke-width='1'/><line x1='700' y1='217.5' x2='881' y2='217.5' stroke='#c4c4c4' stroke-width='1'/><rect x='705' y='202' width='13' height='14' fill='#c8c8c8'/><rect x='718' y='169' width='2' height='16' fill='#c8c8c8'/><rect x='717' y='186' width='14' height='14' fill='#c8c8c8'/><rect x='733' y='186' width='8' height='14' fill='#c8c8c8'/><rect x='722' y='202' width='1' height='14' fill='#c8c8c8'/><rect x='729' y='202' width='5' height='14' fill='#c8c8c8'/><rect x='740' y='202' width='43' height='14' fill='#c8c8c8'/><rect x='775' y='218' width='38' height='14' fill='#c8c8c8'/><rect x='816' y='218' width='10' height='14' fill='#c8c8c8'/><rect x='825' y='202' width='48' height='14' fill='#c8c8c8'/><line x1='700' y1='233.5' x2='874' y2='233.5' stroke='#ff0000' stroke-width='1.3'/><polyline points='700,217.5 701.6,201.5 702.8,217.5' fill='none' stroke='#888' stroke-width='0.7'/><line x1='700' y1='217.5' x2='704.6' y2='217.5' stroke='#000' stroke-width='1.4'/><polyline points='704.6,217.5 704.6,201.5 718.3,201.5 719.5,185.5 720.6,185.5 721.4,169.5 721.8,185.5 724.2,201.5 725.7,185.5 727.5,201.5 728,185.5 729.6,185.5 729.6,201.5 746.5,201.5 747.8,217.5 752.6,217.5 753.6,201.5 758.5,201.5 759.8,217.5 764.7,217.5 765.7,201.5 771.5,201.5 771.9,217.5 775.2,217.5 775.4,201.5 776,217.5 777.7,217.5 779.7,233.5 783.6,233.5 784.9,217.5 813.5,217.5 813.5,233.5 816.5,233.5 816.8,217.5 839.5,217.5 840.8,201.5 844.3,201.5 845.7,217.5 852.3,217.5 853.1,201.5 856,201.5 857.8,217.5 863,217.5 865.2,201.5 873.5,201.5' fill='none' stroke='#000' stroke-width='1.4' stroke-linejoin='miter'/><rect x='700' y='163.5' width='181' height='78.5' fill='none' stroke='#000' stroke-width='1'/><line x1='700' y1='163' x2='700' y2='243' stroke='#000' stroke-width='2'/><line x1='699' y1='242' x2='882' y2='242' stroke='#000' stroke-width='2'/><line x1='700' y1='169.5' x2='703' y2='169.5' stroke='#000' stroke-width='1'/><line x1='877' y1='169.5' x2='881' y2='169.5' stroke='#000' stroke-width='1'/><line x1='700' y1='177.5' x2='703' y2='177.5' stroke='#000' stroke-width='1'/><line x1='877' y1='177.5' x2='881' y2='177.5' stroke='#000' stroke-width='1'/><line x1='700' y1='185.5' x2='703' y2='185.5' stroke='#000' stroke-width='1'/><line x1='877' y1='185.5' x2='881' y2='185.5' stroke='#000' stroke-width='1'/><line x1='700' y1='193.5' x2='703' y2='193.5' stroke='#000' stroke-width='1'/><line x1='877' y1='193.5' x2='881' y2='193.5' stroke='#000' stroke-width='1'/><line x1='700' y1='201.5' x2='703' y2='201.5' stroke='#000' stroke-width='1'/><line x1='877' y1='201.5' x2='881' y2='201.5' stroke='#000' stroke-width='1'/><line x1='700' y1='209.5' x2='703' y2='209.5' stroke='#000' stroke-width='1'/><line x1='877' y1='209.5' x2='881' y2='209.5' stroke='#000' stroke-width='1'/><line x1='700' y1='217.5' x2='703' y2='217.5' stroke='#000' stroke-width='1'/><line x1='877' y1='217.5' x2='881' y2='217.5' stroke='#000' stroke-width='1'/><line x1='700' y1='225.5' x2='703' y2='225.5' stroke='#000' stroke-width='1'/><line x1='877' y1='225.5' x2='881' y2='225.5' stroke='#000' stroke-width='1'/><line x1='700' y1='233.5' x2='703' y2='233.5' stroke='#000' stroke-width='1'/><line x1='877' y1='233.5' x2='881' y2='233.5' stroke='#000' stroke-width='1'/><line x1='727.5' y1='238' x2='727.5' y2='242' stroke='#000' stroke-width='1'/><line x1='754.5' y1='238' x2='754.5' y2='242' stroke='#000' stroke-width='1'/><line x1='780.5' y1='238' x2='780.5' y2='242' stroke='#000' stroke-width='1'/><line x1='807.5' y1='238' x2='807.5' y2='242' stroke='#000' stroke-width='1'/><line x1='834.5' y1='238' x2='834.5' y2='242' stroke='#000' stroke-width='1'/><line x1='861.5' y1='238' x2='861.5' y2='242' stroke='#000' stroke-width='1'/><rect x='882' y='195' width='42' height='12' fill='#000'/><rect x='882' y='227' width='42' height='12' fill='#ff0000'/></svg>
<div class=t style="left:883.62px;top:165px;font:9px/9px 'Liberation Sans',sans-serif;color:#000;letter-spacing:0.050px;">0,002</div>
<div class=t style="left:883.62px;top:181px;font:9px/9px 'Liberation Sans',sans-serif;color:#000;letter-spacing:0.050px;">0,0019</div>
<div class=t style="left:883.62px;top:197px;font:9px/9px 'Liberation Sans',sans-serif;color:#fff;letter-spacing:0.050px;">0,0018</div>
<div class=t style="left:883.62px;top:213px;font:9px/9px 'Liberation Sans',sans-serif;color:#000;letter-spacing:0.050px;">0,0017</div>
<div class=t style="left:883.62px;top:229px;font:9px/9px 'Liberation Sans',sans-serif;color:#fff;letter-spacing:0.050px;">0,0016</div>
<div class=t style="left:717.38px;top:245px;font:9px/9px 'Liberation Sans',sans-serif;color:#000;letter-spacing:-0.333px;">1030</div>
<div class=t style="left:744.38px;top:245px;font:9px/9px 'Liberation Sans',sans-serif;color:#000;letter-spacing:-0.125px;">1130</div>
<div class=t style="left:770.98px;top:245px;font:9px/9px 'Liberation Sans',sans-serif;color:#000;letter-spacing:-0.333px;">1230</div>
<div class=t style="left:797.88px;top:245px;font:9px/9px 'Liberation Sans',sans-serif;color:#000;letter-spacing:-0.333px;">1330</div>
<div class=t style="left:824.67px;top:245px;font:9px/9px 'Liberation Sans',sans-serif;color:#000;letter-spacing:-0.333px;">1430</div>
<div class=t style="left:852.08px;top:245px;font:9px/9px 'Liberation Sans',sans-serif;color:#000;letter-spacing:-0.333px;">1530</div>
<svg style='left:691px;top:258px' width='214' height='17' shape-rendering='crispEdges'><polygon points='168.5,1.5 198.5,1.5 212.5,15.5 168.5,15.5' fill='#dedede' stroke='#000' stroke-width='1'/><path d='M169.5 14.5 V2.5 H198' fill='none' stroke='#fff' stroke-width='1'/><line x1='169' y1='14.5' x2='211' y2='14.5' stroke='#aaa' stroke-width='1'/><polygon points='119.5,1.5 162.5,1.5 176.5,15.5 119.5,15.5' fill='#dedede' stroke='#000' stroke-width='1'/><path d='M120.5 14.5 V2.5 H162' fill='none' stroke='#fff' stroke-width='1'/><line x1='120' y1='14.5' x2='175' y2='14.5' stroke='#aaa' stroke-width='1'/><polygon points='67.5,1.5 112.5,1.5 126.5,15.5 67.5,15.5' fill='#dedede' stroke='#000' stroke-width='1'/><path d='M68.5 14.5 V2.5 H112' fill='none' stroke='#fff' stroke-width='1'/><line x1='68' y1='14.5' x2='125' y2='14.5' stroke='#aaa' stroke-width='1'/><polygon points='2.5,1.5 60.5,1.5 74.5,15.5 2.5,15.5' fill='#fff' stroke='#000' stroke-width='1'/><line x1='3' y1='14.5' x2='73' y2='14.5' stroke='#aaa' stroke-width='1'/></svg>
<div class=t style="left:700.62px;top:263px;font:9px/9px 'Liberation Sans',sans-serif;color:#000;letter-spacing:0.817px;-webkit-text-stroke:0.15px #000;transform:scaleY(1.17);transform-origin:0 7px;">Quote Info</div>
<div class=t style="left:765.70px;top:263px;font:9px/9px 'Liberation Sans',sans-serif;color:#000;letter-spacing:1.004px;-webkit-text-stroke:0.15px #000;transform:scaleY(1.17);transform-origin:0 7px;">Auction</div>
<div class=t style="left:816.62px;top:263px;font:9px/9px 'Liberation Sans',sans-serif;color:#000;letter-spacing:1.042px;-webkit-text-stroke:0.15px #000;transform:scaleY(1.17);transform-origin:0 7px;">Indices</div>
<div class=t style="left:865.55px;top:263px;font:9px/9px 'Liberation Sans',sans-serif;color:#000;letter-spacing:1.150px;-webkit-text-stroke:0.15px #000;transform:scaleY(1.17);transform-origin:0 7px;">Flow</div>
<div class=r style='left:690px;top:275px;width:236px;height:114px;border:1px solid #000;background:#fff'></div>
<div class=t style="left:692.98px;top:278px;font:bold 12px/12px 'Liberation Sans',sans-serif;color:#000;letter-spacing:-0.150px;">Time</div>
<div class=t style="left:772.19px;top:278px;font:12px/12px 'Liberation Sans',sans-serif;color:#000;letter-spacing:0.120px;">16:00</div>
<div class=t style="left:809.95px;top:278px;font:bold 12px/12px 'Liberation Sans',sans-serif;color:#000;letter-spacing:-0.150px;">Lst.Chg</div>
<div class=t style="left:890.42px;top:278px;font:12px/12px 'Liberation Sans',sans-serif;color:#000;letter-spacing:0.120px;">15:56</div>
<div class=r style="left:692px;top:292px;width:231px;height:16px;background:#eeeeee;"></div>
<div class=t style="left:692.60px;top:294px;font:bold 12px/12px 'Liberation Sans',sans-serif;color:#000;letter-spacing:-0.150px;">Cur</div>
<div class=t style="left:764.17px;top:294px;font:bold 12px/12px 'Liberation Sans',sans-serif;color:#008200;letter-spacing:0.350px;">0.0018</div>
<div class=t style="left:812.95px;top:294px;font:bold 12px/12px 'Liberation Sans',sans-serif;color:#000;letter-spacing:-0.150px;">Mid</div>
<div class=t style="left:876.80px;top:294px;font:12px/12px 'Liberation Sans',sans-serif;color:#000;letter-spacing:0.120px;">0.00175</div>
<div class=t style="left:695.60px;top:310px;font:bold 12px/12px 'Liberation Sans',sans-serif;color:#000;letter-spacing:-0.150px;">Open</div>
<div class=t style="left:765.57px;top:310px;font:12px/12px 'Liberation Sans',sans-serif;color:#000;letter-spacing:0.120px;">0.0017</div>
<div class=t style="left:810.45px;top:310px;font:bold 12px/12px 'Liberation Sans',sans-serif;color:#000;letter-spacing:-0.150px;">Yest</div>
<div class=t style="left:883.67px;top:310px;font:12px/12px 'Liberation Sans',sans-serif;color:#000;letter-spacing:0.120px;">0.0016</div>
<div class=r style="left:692px;top:324px;width:231px;height:16px;background:#eeeeee;"></div>
<div class=t style="left:692.35px;top:326px;font:bold 12px/12px 'Liberation Sans',sans-serif;color:#000;letter-spacing:-0.150px;">High</div>
<div class=t style="left:772.32px;top:326px;font:12px/12px 'Liberation Sans',sans-serif;color:#000;letter-spacing:0.120px;">0.002</div>
<div class=t style="left:810.58px;top:326px;font:bold 12px/12px 'Liberation Sans',sans-serif;color:#000;letter-spacing:-0.150px;">VWAP</div>
<div class=t style="left:883.67px;top:326px;font:12px/12px 'Liberation Sans',sans-serif;color:#000;letter-spacing:0.120px;">0.0017</div>
<div class=t style="left:692.35px;top:342px;font:bold 12px/12px 'Liberation Sans',sans-serif;color:#000;letter-spacing:-0.150px;">Low</div>
<div class=t style="left:765.57px;top:342px;font:12px/12px 'Liberation Sans',sans-serif;color:#000;letter-spacing:0.120px;">0.0016</div>
<div class=t style="left:810.58px;top:342px;font:bold 12px/12px 'Liberation Sans',sans-serif;color:#000;letter-spacing:-0.150px;">Trades</div>
<div class=t style="left:900.66px;top:342px;font:12px/12px 'Liberation Sans',sans-serif;color:#000;letter-spacing:0.120px;">209</div>
<div class=r style="left:692px;top:356px;width:231px;height:16px;background:#eeeeee;"></div>
<div class=t style="left:692.98px;top:358px;font:bold 12px/12px 'Liberation Sans',sans-serif;color:#000;letter-spacing:-0.150px;">Trd.Hi</div>
<div class=t style="left:772.32px;top:358px;font:12px/12px 'Liberation Sans',sans-serif;color:#000;letter-spacing:0.120px;">0.002</div>
<div class=t style="left:810.33px;top:358px;font:bold 12px/12px 'Liberation Sans',sans-serif;color:#000;letter-spacing:-0.150px;">Spread</div>
<div class=t style="left:883.67px;top:358px;font:12px/12px 'Liberation Sans',sans-serif;color:#000;letter-spacing:0.120px;">0.0001</div>
<div class=t style="left:692.98px;top:374px;font:bold 12px/12px 'Liberation Sans',sans-serif;color:#000;letter-spacing:-0.150px;">Trd.Lo</div>
<div class=t style="left:765.57px;top:374px;font:12px/12px 'Liberation Sans',sans-serif;color:#000;letter-spacing:0.120px;">0.0016</div>
<div class=t style="left:810.33px;top:374px;font:bold 12px/12px 'Liberation Sans',sans-serif;color:#000;letter-spacing:-0.150px;">Sprd %</div>
<div class=t style="left:893.16px;top:374px;font:12px/12px 'Liberation Sans',sans-serif;color:#000;letter-spacing:0.120px;">5.6%</div>
<svg style='left:691px;top:393px' width='58' height='17' shape-rendering='crispEdges'><polygon points='2.5,1.5 42.5,1.5 56.5,15.5 2.5,15.5' fill='#fff' stroke='#000' stroke-width='1'/><line x1='3' y1='14.5' x2='55' y2='14.5' stroke='#aaa' stroke-width='1'/></svg>
<div class=t style="left:700.95px;top:398px;font:9px/9px 'Liberation Sans',sans-serif;color:#000;letter-spacing:0.780px;-webkit-text-stroke:0.15px #000;transform:scaleY(1.17);transform-origin:0 7px;">Trades</div>
<div class=r style='left:690px;top:410px;width:236px;height:248px;border:1px solid #000;background:#fff'></div>
<div class=r style="left:692px;top:412px;width:15px;height:246px;background:#dcdcdc;"></div>
<div class=r style="left:708px;top:412px;width:219px;height:19px;background:#e0e0e0;"></div>
<div class=t style="left:727.30px;top:417px;font:bold 12px/12px 'Liberation Sans',sans-serif;color:#008200;letter-spacing:0.300px;">0,0018</div>
<div class=t style="left:787.18px;top:417px;font:12px/12px 'Liberation Sans',sans-serif;color:#000;letter-spacing:0.120px;">200.000</div>
<div class=t style="left:877.73px;top:417px;font:12px/12px 'Liberation Sans',sans-serif;color:#000;letter-spacing:0.170px;">15:59:34</div>
<div class=r style="left:708px;top:431px;width:219px;height:19px;background:#e0e0e0;"></div>
<div class=t style="left:727.30px;top:436px;font:bold 12px/12px 'Liberation Sans',sans-serif;color:#008200;letter-spacing:0.300px;">0,0018</div>
<div class=t style="left:787.18px;top:436px;font:12px/12px 'Liberation Sans',sans-serif;color:#000;letter-spacing:0.120px;">260.000</div>
<div class=t style="left:877.73px;top:436px;font:12px/12px 'Liberation Sans',sans-serif;color:#000;letter-spacing:0.170px;">15:56:51</div>
<div class=t style="left:727.30px;top:455px;font:bold 12px/12px 'Liberation Sans',sans-serif;color:#cc0000;letter-spacing:0.300px;">0,0017</div>
<div class=t style="left:794.05px;top:455px;font:12px/12px 'Liberation Sans',sans-serif;color:#000;letter-spacing:0.120px;">10.000</div>
<div class=t style="left:877.73px;top:455px;font:12px/12px 'Liberation Sans',sans-serif;color:#000;letter-spacing:0.170px;">15:56:51</div>
<div class=r style="left:708px;top:469px;width:219px;height:19px;background:#e0e0e0;"></div>
<div class=t style="left:727.30px;top:474px;font:bold 12px/12px 'Liberation Sans',sans-serif;color:#008200;letter-spacing:0.300px;">0,0018</div>
<div class=t style="left:787.30px;top:474px;font:12px/12px 'Liberation Sans',sans-serif;color:#000;letter-spacing:0.120px;">666.666</div>
<div class=t style="left:877.73px;top:474px;font:12px/12px 'Liberation Sans',sans-serif;color:#000;letter-spacing:0.170px;">15:56:36</div>
<div class=r style="left:708px;top:488px;width:219px;height:19px;background:#e0e0e0;"></div>
<div class=t style="left:727.30px;top:493px;font:bold 12px/12px 'Liberation Sans',sans-serif;color:#008200;letter-spacing:0.300px;">0,0018</div>
<div class=t style="left:787.18px;top:493px;font:12px/12px 'Liberation Sans',sans-serif;color:#000;letter-spacing:0.120px;">200.000</div>
<div class=t style="left:877.73px;top:493px;font:12px/12px 'Liberation Sans',sans-serif;color:#000;letter-spacing:0.170px;">15:51:16</div>
<div class=r style="left:708px;top:507px;width:219px;height:19px;background:#e0e0e0;"></div>
<div class=t style="left:727.30px;top:512px;font:bold 12px/12px 'Liberation Sans',sans-serif;color:#008200;letter-spacing:0.300px;">0,0018</div>
<div class=t style="left:787.18px;top:512px;font:12px/12px 'Liberation Sans',sans-serif;color:#000;letter-spacing:0.120px;">300.000</div>
<div class=t style="left:877.73px;top:512px;font:12px/12px 'Liberation Sans',sans-serif;color:#000;letter-spacing:0.170px;">15:51:11</div>
<div class=r style="left:708px;top:526px;width:219px;height:19px;background:#e0e0e0;"></div>
<div class=t style="left:727.30px;top:531px;font:bold 12px/12px 'Liberation Sans',sans-serif;color:#008200;letter-spacing:0.300px;">0,0018</div>
<div class=t style="left:788.05px;top:531px;font:12px/12px 'Liberation Sans',sans-serif;color:#000;letter-spacing:0.120px;">159.110</div>
<div class=t style="left:877.73px;top:531px;font:12px/12px 'Liberation Sans',sans-serif;color:#000;letter-spacing:0.170px;">15:46:11</div>
<div class=r style="left:708px;top:545px;width:219px;height:19px;background:#e0e0e0;"></div>
<div class=t style="left:727.30px;top:550px;font:bold 12px/12px 'Liberation Sans',sans-serif;color:#008200;letter-spacing:0.300px;">0,0018</div>
<div class=t style="left:787.18px;top:550px;font:12px/12px 'Liberation Sans',sans-serif;color:#000;letter-spacing:0.120px;">170.000</div>
<div class=t style="left:877.73px;top:550px;font:12px/12px 'Liberation Sans',sans-serif;color:#000;letter-spacing:0.170px;">15:46:01</div>
<div class=t style="left:727.30px;top:569px;font:bold 12px/12px 'Liberation Sans',sans-serif;color:#cc0000;letter-spacing:0.300px;">0,0016</div>
<div class=t style="left:777.06px;top:569px;font:12px/12px 'Liberation Sans',sans-serif;color:#000;letter-spacing:0.120px;">6.864.447</div>
<div class=t style='left:835.8px;top:569px;width:32.4px;overflow:hidden;font:12px/12px "Liberation Sans",sans-serif;letter-spacing:-0.1px'>average</div>
<div class=t style="left:877.73px;top:569px;font:12px/12px 'Liberation Sans',sans-serif;color:#000;letter-spacing:0.170px;">15:40:19</div>
<div class=r style="left:708px;top:583px;width:219px;height:19px;background:#e0e0e0;"></div>
<div class=t style="left:727.30px;top:588px;font:bold 12px/12px 'Liberation Sans',sans-serif;color:#008200;letter-spacing:0.300px;">0,0018</div>
<div class=t style="left:787.18px;top:588px;font:12px/12px 'Liberation Sans',sans-serif;color:#000;letter-spacing:0.120px;">330.000</div>
<div class=t style="left:877.73px;top:588px;font:12px/12px 'Liberation Sans',sans-serif;color:#000;letter-spacing:0.170px;">15:39:44</div>
<div class=t style="left:727.30px;top:607px;font:bold 12px/12px 'Liberation Sans',sans-serif;color:#cc0000;letter-spacing:0.300px;">0,0017</div>
<div class=t style="left:776.94px;top:607px;font:12px/12px 'Liberation Sans',sans-serif;color:#000;letter-spacing:0.120px;">1.000.000</div>
<div class=t style="left:877.73px;top:607px;font:12px/12px 'Liberation Sans',sans-serif;color:#000;letter-spacing:0.170px;">15:38:59</div>
<div class=t style="left:727.30px;top:626px;font:bold 12px/12px 'Liberation Sans',sans-serif;color:#cc0000;letter-spacing:0.300px;">0,0017</div>
<div class=t style="left:777.06px;top:626px;font:12px/12px 'Liberation Sans',sans-serif;color:#000;letter-spacing:0.120px;">1.524.185</div>
<div class=t style="left:877.73px;top:626px;font:12px/12px 'Liberation Sans',sans-serif;color:#000;letter-spacing:0.170px;">15:36:14</div>
<div class=t style="left:727.30px;top:645px;font:bold 12px/12px 'Liberation Sans',sans-serif;color:#cc0000;letter-spacing:0.300px;">0,0017</div>
<div class=t style="left:794.05px;top:645px;font:12px/12px 'Liberation Sans',sans-serif;color:#000;letter-spacing:0.120px;">70.000</div>
<div class=t style="left:877.73px;top:645px;font:12px/12px 'Liberation Sans',sans-serif;color:#000;letter-spacing:0.170px;">15:31:09</div>
<div class=r style='left:693px;top:413px;width:12px;height:12px;background:#c0c0c0;border-top:1px solid #fff;border-left:1px solid #fff;border-right:1px solid #000;border-bottom:1px solid #000;box-shadow:-1px -1px 0 #dadada'></div>
<svg style='left:696px;top:416px' width='8' height='6'><path d='M0 5 H8 L4 1 Z' fill='#000'/></svg>
<div class=r style='left:693px;top:428px;width:12px;height:21px;background:#c0c0c0;border-top:1px solid #fff;border-left:1px solid #fff;border-right:1px solid #000;border-bottom:1px solid #000;box-shadow:-1px -1px 0 #dadada'></div>
<div class=r style='left:693px;top:644px;width:12px;height:12px;background:#c0c0c0;border-top:1px solid #fff;border-left:1px solid #fff;border-right:1px solid #000;border-bottom:1px solid #000;box-shadow:-1px -1px 0 #dadada'></div>
<svg style='left:696px;top:647px' width='8' height='6'><path d='M0 1 H8 L4 5 Z' fill='#000'/></svg>
<svg style='left:254px;top:668px' width='50' height='17' shape-rendering='crispEdges'><polygon points='2.5,1.5 34.5,1.5 48.5,15.5 2.5,15.5' fill='#fff' stroke='#000' stroke-width='1'/><line x1='3' y1='14.5' x2='47' y2='14.5' stroke='#aaa' stroke-width='1'/></svg>
<div class=t style="left:262.95px;top:673px;font:9px/9px 'Liberation Sans',sans-serif;color:#000;letter-spacing:0.542px;-webkit-text-stroke:0.15px #000;transform:scaleY(1.0);transform-origin:0 7px;">News</div>
<div class=r style='left:253px;top:685px;width:678px;height:100px;border:1px solid #000;background:#fff'></div>
<div class=r style="left:254px;top:686px;width:40px;height:19px;background:#e0e0e0;"></div>
<div class=r style="left:295px;top:686px;width:55px;height:19px;background:#e0e0e0;"></div>
<div class=r style="left:351px;top:686px;width:336px;height:19px;background:#e0e0e0;"></div>
<div class=r style="left:688px;top:686px;width:100px;height:19px;background:#e0e0e0;"></div>
<div class=r style="left:789px;top:686px;width:128px;height:19px;background:#e0e0e0;"></div>
<div class=t style="left:257.98px;top:690px;font:12px/12px 'Liberation Sans',sans-serif;color:#000;letter-spacing:0.300px;">21:59</div>
<div class=t style="left:300.70px;top:690px;font:12px/12px 'Liberation Sans',sans-serif;color:#000;letter-spacing:0.050px;">PRNCA</div>
<div class=t style="left:352.80px;top:690px;font:12px/12px 'Liberation Sans',sans-serif;color:#000;letter-spacing:0.133px;text-decoration:underline;">HSBC partners with Indspire and Pathways to Education to...</div>
<div class=t style="left:710.08px;top:690px;font:12px/12px 'Liberation Sans',sans-serif;color:#000;letter-spacing:0.050px;text-decoration:underline;">HSB.PR.E</div>
<div class=t style='left:789.4px;top:690px;width:127.6px;overflow:hidden;font:12px/12px "Liberation Sans",sans-serif;letter-spacing:0.3px'>Hsbc Bank Canada CL</div>
<div class=t style="left:257.98px;top:710px;font:12px/12px 'Liberation Sans',sans-serif;color:#000;letter-spacing:0.300px;">21:58</div>
<div class=t style="left:301.45px;top:710px;font:12px/12px 'Liberation Sans',sans-serif;color:#000;letter-spacing:0.050px;">GLOBE</div>
<div class=t style="left:353.30px;top:710px;font:12px/12px 'Liberation Sans',sans-serif;color:#000;letter-spacing:-0.125px;text-decoration:underline;">OCH-ZIFF CAPITAL MANAGEMENT GROUP LLC -- SHARE...</div>
<div class=t style="left:725.39px;top:710px;font:12px/12px 'Liberation Sans',sans-serif;color:#000;letter-spacing:0.050px;text-decoration:underline;">OZM</div>
<div class=t style='left:789.4px;top:710px;width:127.6px;overflow:hidden;font:12px/12px "Liberation Sans",sans-serif;letter-spacing:0.3px'>Och-Ziff Capital Management</div>
<div class=r style="left:254px;top:726px;width:40px;height:19px;background:#e0e0e0;"></div>
<div class=r style="left:295px;top:726px;width:55px;height:19px;background:#e0e0e0;"></div>
<div class=r style="left:351px;top:726px;width:336px;height:19px;background:#e0e0e0;"></div>
<div class=r style="left:688px;top:726px;width:100px;height:19px;background:#e0e0e0;"></div>
<div class=r style="left:789px;top:726px;width:128px;height:19px;background:#e0e0e0;"></div>
<div class=t style="left:257.98px;top:730px;font:12px/12px 'Liberation Sans',sans-serif;color:#000;letter-spacing:0.300px;">21:59</div>
<div class=t style="left:300.70px;top:730px;font:12px/12px 'Liberation Sans',sans-serif;color:#000;letter-spacing:0.050px;">PRNCA</div>
<div class=t style="left:352.80px;top:730px;font:12px/12px 'Liberation Sans',sans-serif;color:#000;letter-spacing:0.133px;text-decoration:underline;">HSBC partners with Indspire and Pathways to Education to...</div>
<div class=t style="left:709.76px;top:730px;font:12px/12px 'Liberation Sans',sans-serif;color:#000;letter-spacing:0.050px;text-decoration:underline;">HSB.PR.D</div>
<div class=t style='left:789.4px;top:730px;width:127.6px;overflow:hidden;font:12px/12px "Liberation Sans",sans-serif;letter-spacing:0.3px'>Hsbc Bank Canada CL</div>
<div class=t style="left:257.98px;top:750px;font:12px/12px 'Liberation Sans',sans-serif;color:#000;letter-spacing:0.300px;">21:59</div>
<div class=t style="left:312.15px;top:750px;font:12px/12px 'Liberation Sans',sans-serif;color:#000;letter-spacing:0.050px;">BW</div>
<div class=t style="left:352.80px;top:750px;font:12px/12px 'Liberation Sans',sans-serif;color:#000;letter-spacing:0.031px;text-decoration:underline;">Fitch Rates Oklahoma's $16MM ODFA Bonds 'AA'; Outlook ...</div>
<div class=r style="left:254px;top:766px;width:40px;height:19px;background:#e0e0e0;"></div>
<div class=r style="left:295px;top:766px;width:55px;height:19px;background:#e0e0e0;"></div>
<div class=r style="left:351px;top:766px;width:336px;height:19px;background:#e0e0e0;"></div>
<div class=r style="left:688px;top:766px;width:100px;height:19px;background:#e0e0e0;"></div>
<div class=r style="left:789px;top:766px;width:128px;height:19px;background:#e0e0e0;"></div>
<div class=r style="left:917px;top:686px;width:14px;height:82px;background:#dcdcdc;"></div>
<div class=r style='left:918px;top:687px;width:12px;height:12px;background:#c0c0c0;border-top:1px solid #fff;border-left:1px solid #fff;border-right:1px solid #000;border-bottom:1px solid #000;box-shadow:-1px -1px 0 #dadada'></div>
<svg style='left:921px;top:690px' width='8' height='6'><path d='M0 5 H8 L4 1 Z' fill='#000'/></svg>
<div class=r style='left:918px;top:702px;width:12px;height:4px;background:#c0c0c0;border-top:1px solid #fff;border-left:1px solid #fff;border-right:1px solid #000;border-bottom:1px solid #000;box-shadow:-1px -1px 0 #dadada'></div>
<div class=r style="left:0px;top:767px;width:1349px;height:1px;background:#e8e8e8;"></div>
</div></body></html>
